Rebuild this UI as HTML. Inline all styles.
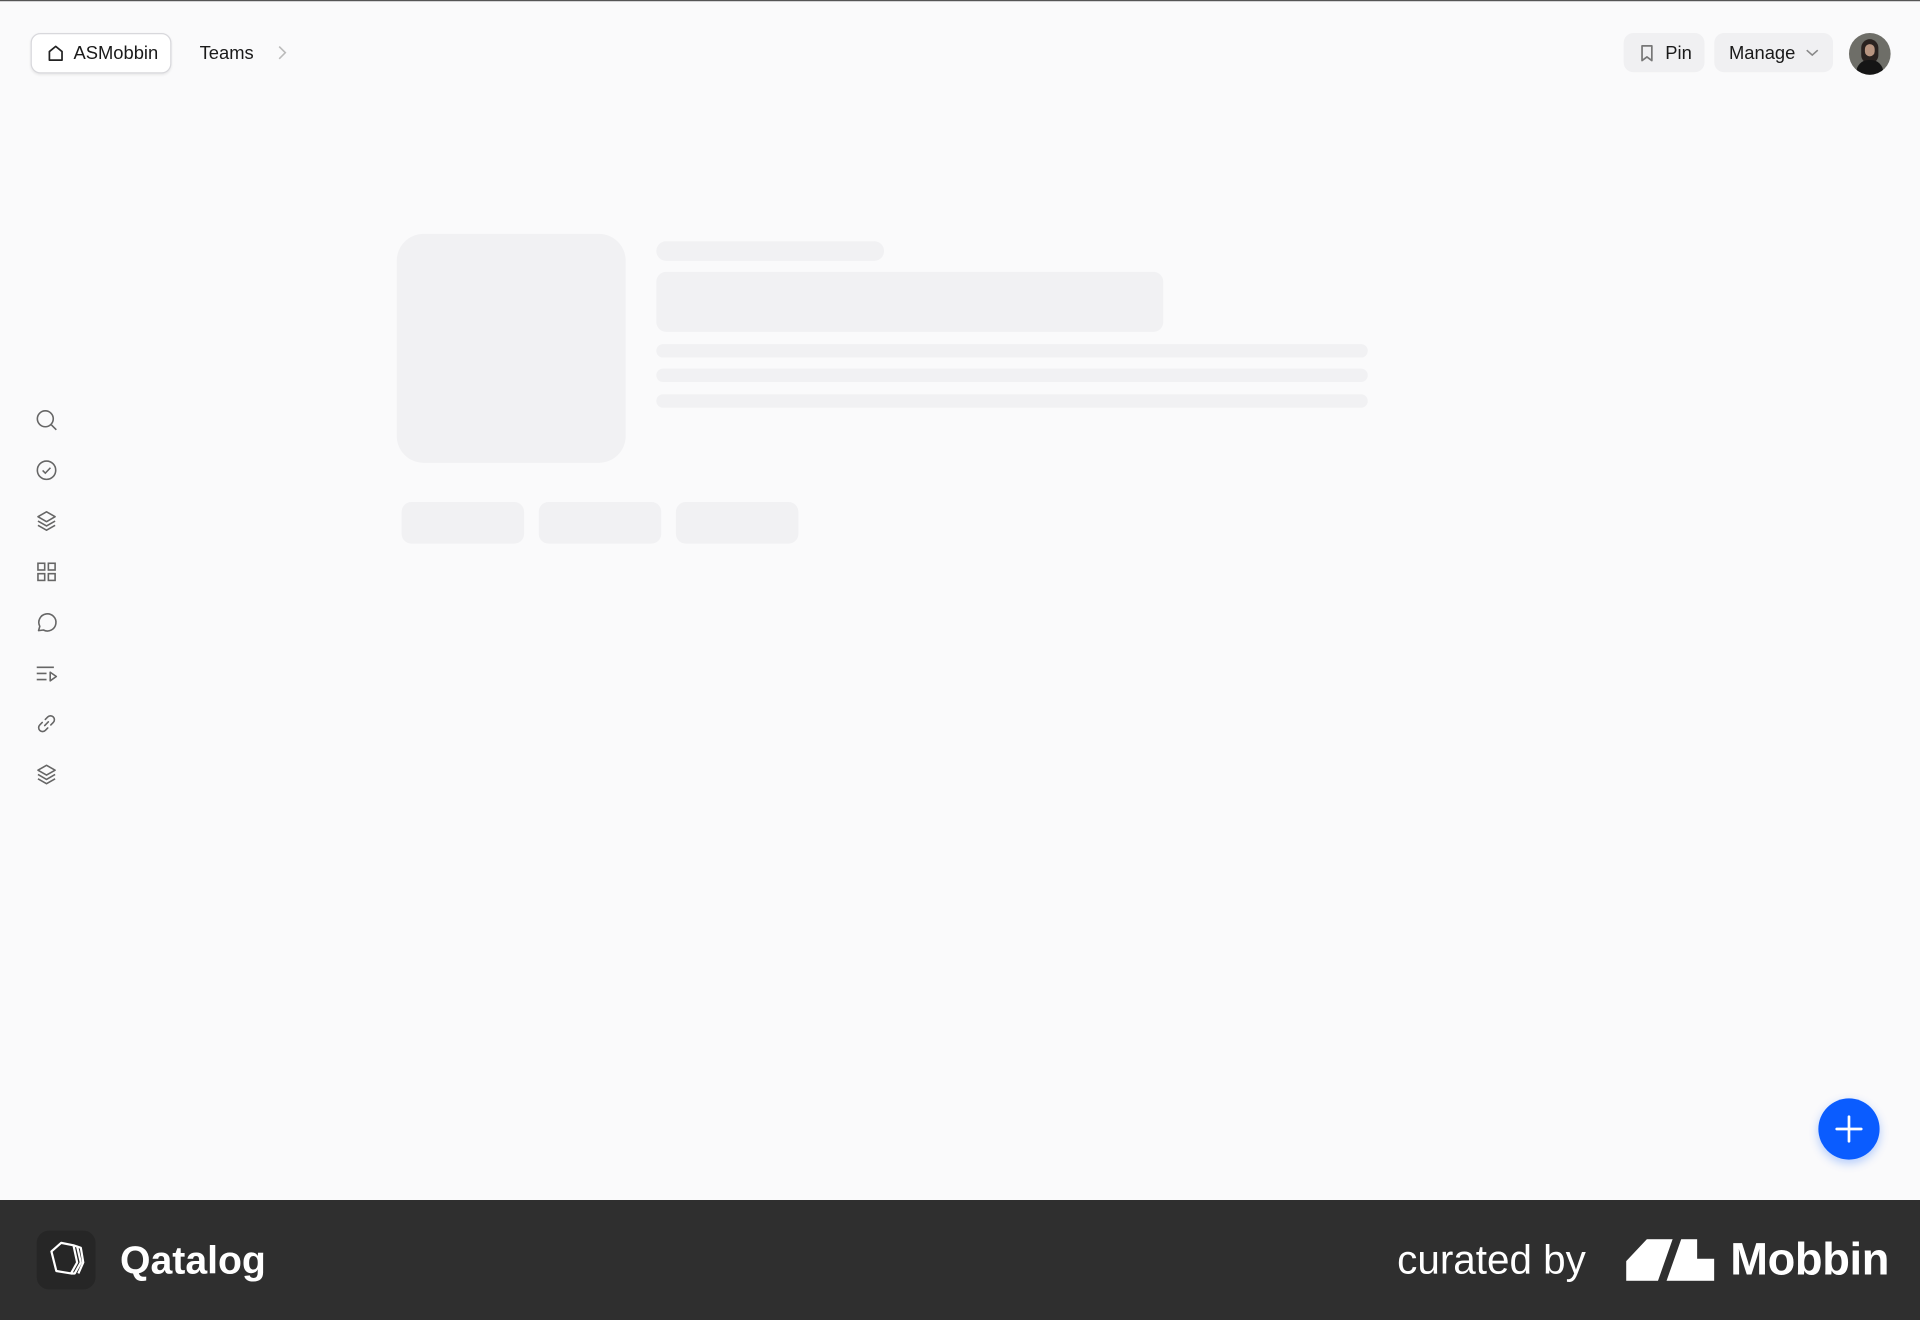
<!DOCTYPE html>
<html><head><meta charset="utf-8"><style>
html,body{margin:0;padding:0;width:1920px;height:1320px;overflow:hidden;background:#fafafb;font-family:"Liberation Sans",sans-serif}
#w{position:absolute;left:0;top:0;width:1568px;height:1078px;transform:scale(1.22449);transform-origin:0 0;background:#fafafb}
.a{position:absolute}
.sk{position:absolute;background:#f1f1f3;border-radius:8px}
.btn{position:absolute;height:32px;border-radius:8px;font-size:15px;color:#1a1a1a;display:flex;align-items:center;box-sizing:border-box}
.ic{position:absolute;left:28px;width:20px;height:20px}
</style></head><body><div id="w">
<div class="a" style="left:0;top:0;width:1568px;height:1px;background:#555"></div>
<div class="btn" style="left:25px;top:27px;width:115px;height:33px;border:1px solid #d8d8dc;background:#fff;padding-left:12px;box-shadow:0 1px 2px rgba(0,0,0,.08)">
<svg width="15" height="15" viewBox="0 0 16 16" style="margin-right:7px"><path d="M2.5 14V6.5L8 2l5.5 4.5V14z" fill="none" stroke="#222" stroke-width="1.5" stroke-linejoin="round"/></svg>ASMobbin</div>
<div class="btn" style="left:163px;top:27px">Teams</div>
<svg class="a" style="left:225px;top:36px" width="12" height="14" viewBox="0 0 12 14"><path d="M3 2l5 5-5 5" fill="none" stroke="#bbb" stroke-width="1.3"/></svg>
<div class="btn" style="left:1326px;top:27px;width:66px;background:#f0f0f2;padding-left:13px">
<svg width="12" height="15" viewBox="0 0 12 15" style="margin-right:9px"><path d="M2 1.5h8v12l-4-3-4 3z" fill="none" stroke="#777" stroke-width="1.4" stroke-linejoin="round"/></svg>Pin</div>
<div class="btn" style="left:1400px;top:27px;width:97px;background:#f0f0f2;padding-left:12px">Manage
<svg width="12" height="8" viewBox="0 0 12 8" style="margin-left:8px"><path d="M1.5 2l4.5 4 4.5-4" fill="none" stroke="#888" stroke-width="1.3"/></svg></div>
<div class="a" style="left:1510px;top:27px;width:34px;height:34px;border-radius:50%;background:#6e6e68;overflow:hidden"><div class="a" style="left:10px;top:5px;width:14px;height:20px;border-radius:7px;background:#2a2220"></div><div class="a" style="left:13px;top:9px;width:8px;height:10px;border-radius:4px;background:#b89480"></div><div class="a" style="left:6px;top:22px;width:22px;height:14px;border-radius:10px 10px 0 0;background:#151515"></div></div>

<svg class="ic" style="top:333px" viewBox="0 0 20 20"><circle cx="9" cy="9" r="6.5" fill="none" stroke="#666" stroke-width="1.3"/><path d="M14 14l4 4" stroke="#666" stroke-width="1.3"/></svg>
<svg class="ic" style="top:374px" viewBox="0 0 20 20"><circle cx="10" cy="10" r="7.5" fill="none" stroke="#666" stroke-width="1.3"/><path d="M6.8 10.2l2.2 2.2 4.2-4.4" fill="none" stroke="#666" stroke-width="1.3"/></svg>
<svg class="ic" style="top:415px" viewBox="0 0 20 20"><path d="M10 3l7 4-7 4-7-4z M3 10.5l7 4 7-4 M3 14l7 4 7-4" fill="none" stroke="#666" stroke-width="1.3" stroke-linejoin="round"/></svg>
<svg class="ic" style="top:457px" viewBox="0 0 20 20"><g fill="none" stroke="#666" stroke-width="1.3"><rect x="3" y="3" width="5.5" height="5.5"/><rect x="11.5" y="3" width="5.5" height="5.5"/><rect x="3" y="11.5" width="5.5" height="5.5"/><rect x="11.5" y="11.5" width="5.5" height="5.5"/></g></svg>
<svg class="ic" style="top:498px" viewBox="0 0 20 20"><path d="M3.5 17l1-3.5A7 7 0 1 1 7.5 16.5z" fill="none" stroke="#666" stroke-width="1.3" stroke-linejoin="round"/></svg>
<svg class="ic" style="top:540px" viewBox="0 0 20 20"><path d="M2 5h14 M2 10h8 M2 15h8 M13 9v7l5-3.5z" fill="none" stroke="#666" stroke-width="1.3" stroke-linejoin="round"/></svg>
<svg class="ic" style="top:581px" viewBox="0 0 20 20"><path d="M8.5 11.5l3-3 M9 6.5l2-2a3 3 0 0 1 4.5 4.5l-2 2 M11 13.5l-2 2A3 3 0 0 1 4.5 11l2-2" fill="none" stroke="#666" stroke-width="1.3" stroke-linecap="round"/></svg>
<svg class="ic" style="top:622px" viewBox="0 0 20 20"><path d="M10 3l7 4-7 4-7-4z M3 10.5l7 4 7-4 M3 14l7 4 7-4" fill="none" stroke="#666" stroke-width="1.3" stroke-linejoin="round"/></svg>

<div class="sk" style="left:324px;top:191px;width:187px;height:187px;border-radius:22px"></div>
<div class="sk" style="left:536px;top:197px;width:186px;height:16px"></div>
<div class="sk" style="left:536px;top:222px;width:414px;height:49px"></div>
<div class="sk" style="left:536px;top:281px;width:581px;height:11px"></div>
<div class="sk" style="left:536px;top:301px;width:581px;height:11px"></div>
<div class="sk" style="left:536px;top:322px;width:581px;height:11px"></div>
<div class="sk" style="left:328px;top:410px;width:100px;height:34px"></div>
<div class="sk" style="left:440px;top:410px;width:100px;height:34px"></div>
<div class="sk" style="left:552px;top:410px;width:100px;height:34px"></div>

<div class="a" style="left:1485px;top:897px;width:50px;height:50px;border-radius:50%;background:#0a5cff;box-shadow:0 3px 8px rgba(10,92,255,.3)"><svg width="50" height="50" viewBox="0 0 50 50"><path d="M25 15v20M15 25h20" stroke="#fff" stroke-width="2.2" stroke-linecap="round"/></svg></div>

<div class="a" style="left:0;top:980px;width:1568px;height:98px;background:#2f2f2f"></div>
<div class="a" style="left:30px;top:1005px;width:48px;height:48px;border-radius:10px;background:#262626"><svg width="48" height="48" viewBox="0 0 48 48"><g fill="none" stroke="#fff" stroke-width="1.8" stroke-linejoin="round"><path d="M12 17l8-7 10 2 3 14-5 9-12-2z"/><path d="M30 12l3 1 3 13-5 9-3-0"/><path d="M33 13l3 1 2 12-4 9"/></g></svg></div>
<div class="a" style="left:98px;top:1011px;font-size:32px;font-weight:bold;color:#fff">Qatalog</div>
<div class="a" style="left:1141px;top:1010px;font-size:33px;color:#fff;letter-spacing:0px">curated by</div>
<svg class="a" style="left:1328px;top:1012px" width="72" height="34" viewBox="0 0 72 34"><path d="M0 18L17 0H38L26 34H0z M45 0H58V16H72V34H33z" fill="#fff"/></svg>
<div class="a" style="left:1413px;top:1008px;font-size:37px;font-weight:bold;color:#fff;letter-spacing:-.3px">Mobbin</div>
</div></body></html>
